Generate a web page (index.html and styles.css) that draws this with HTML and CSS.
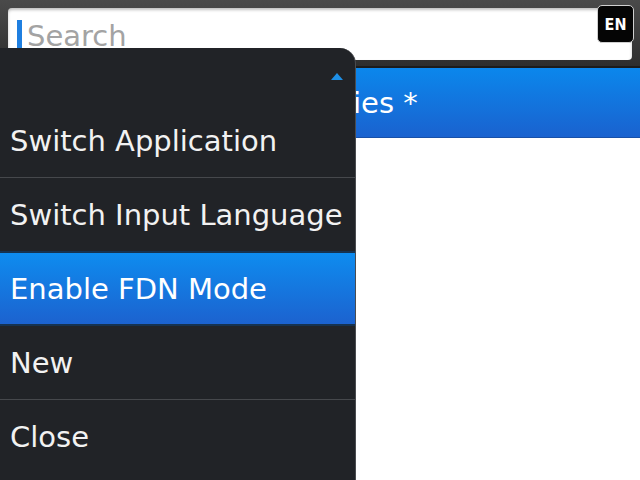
FILE: index.html
```html
<!DOCTYPE html>
<html lang="en">
<head>
  <meta charset="UTF-8" />
  <title>Menu</title>
  <link rel="stylesheet" href="styles.css">
</head>
<body>

  <div class="topbar">
    <div class="search">
      <span class="cursor"></span>
      <span class="placeholder">Search</span>
    </div>
    <div class="lang">EN</div>
  </div>

  <div class="title">ies *</div>
  <div class="content"></div>

  <div class="menu">
    <div class="menu-head">
      <svg class="arrow" width="12" height="7" viewBox="0 0 12 7"><polygon points="6,0 12,7 0,7" fill="#1e8fe6"/></svg>
    </div>
    <div class="item">Switch Application</div>
    <div class="item">Switch Input Language</div>
    <div class="item active">Enable FDN Mode</div>
    <div class="item">New</div>
    <div class="item">Close</div>
  </div>

</body>
</html>
```

FILE: styles.css
```css
body {
  font-family: "DejaVu Sans", sans-serif;
  margin: 0;
  padding: 0;
  width: 640px;
  height: 480px;
  overflow: hidden;
  position: relative;
  background: white;
}

.topbar {
  height: 68px;
  box-sizing: border-box;
  padding: 8px 8px 6px 8px;
  background: linear-gradient(#4a4a4a, #2e2e2e);
  border-bottom: 2px solid #1c1c1c;
}

.search {
  height: 52px;
  background: white;
  border-radius: 4px;
  display: flex;
  align-items: center;
  padding-left: 9px;
  box-shadow: inset 0 2px 3px rgba(0,0,0,0.25);
}

.cursor {
  width: 5px;
  height: 31px;
  background: #1f7fe0;
  margin-right: 5px;
  margin-top: 2px;
}

.placeholder {
  color: #a3a3a3;
  font-size: 29px;
  margin-top: 3px;
}

.lang {
  position: absolute;
  top: 5px;
  right: 6px;
  width: 35px;
  height: 36px;
  background: #050505;
  border: 1px solid #cfcfcf;
  border-radius: 5px;
  color: white;
  font-weight: bold;
  font-size: 16px;
  font-stretch: condensed;
  display: flex;
  align-items: center;
  justify-content: center;
}

.title {
  height: 70px;
  box-sizing: border-box;
  padding-left: 353px;
  background: linear-gradient(#0b87ec, #1a62cf);
  border-bottom: 1px solid #1850a8;
  color: white;
  font-size: 29px;
  display: flex;
  align-items: center;
}

.menu {
  position: absolute;
  left: 0;
  top: 48px;
  bottom: 0;
  width: 355px;
  background: #212327;
  border-right: 1px solid #4a4c50;
  border-top-right-radius: 16px;
  color: #f2f2f2;
  font-size: 29px;
}

.menu-head {
  height: 56px;
  display: flex;
  justify-content: flex-end;
  align-items: flex-start;
  padding-right: 12px;
}

.arrow {
  margin-top: 25px;
}

.item {
  height: 74px;
  box-sizing: border-box;
  padding-left: 10px;
  display: flex;
  align-items: center;
  border-bottom: 1px solid #46484c;
}

.item:last-child {
  border-bottom: none;
}

.item.active {
  background: linear-gradient(#0e8cef, #1c62cf);
  border-top: 2px solid #16324f;
  border-bottom: 2px solid #16324f;
  margin-top: -1px;
  height: 75px;
  color: white;
}
```
